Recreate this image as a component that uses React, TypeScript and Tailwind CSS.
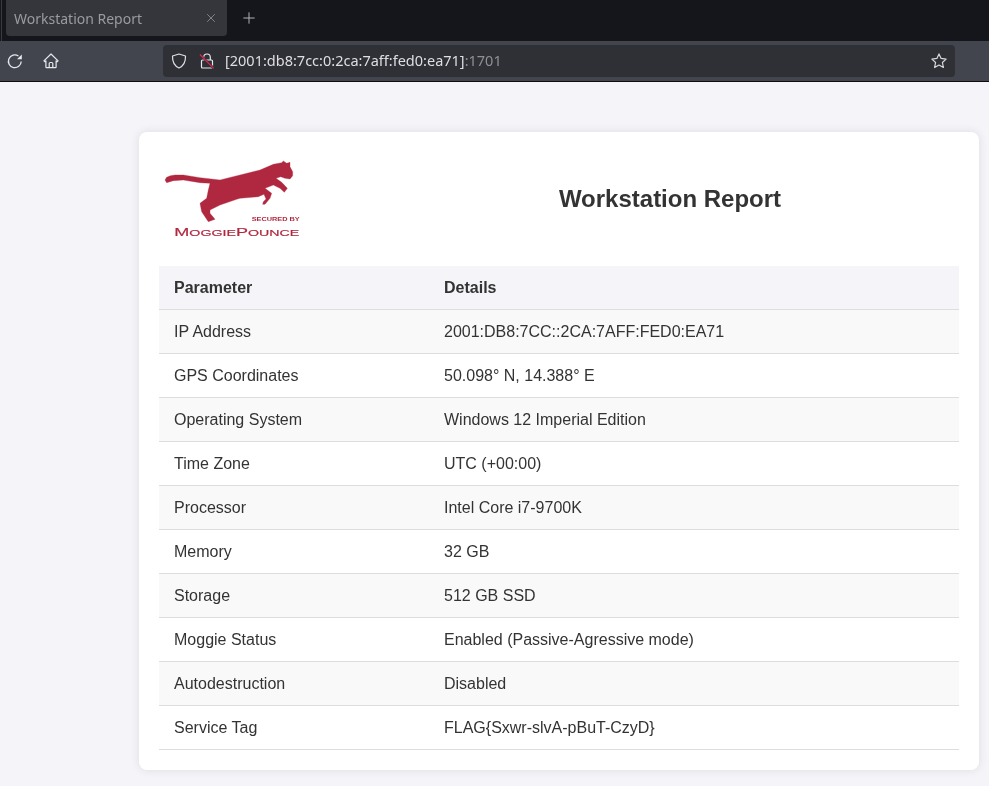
import { Plus, X } from "lucide-react";

const rows = [
  ["IP Address", "2001:DB8:7CC::2CA:7AFF:FED0:EA71"],
  ["GPS Coordinates", "50.098° N, 14.388° E"],
  ["Operating System", "Windows 12 Imperial Edition"],
  ["Time Zone", "UTC (+00:00)"],
  ["Processor", "Intel Core i7-9700K"],
  ["Memory", "32 GB"],
  ["Storage", "512 GB SSD"],
  ["Moggie Status", "Enabled (Passive-Agressive mode)"],
  ["Autodestruction", "Disabled"],
  ["Service Tag", "FLAG{Sxwr-slvA-pBuT-CzyD}"],
];

function Reload() {
  return (
    <svg width="16" height="16" viewBox="0 0 16 16" fill="none" stroke="#e8e8ec" strokeWidth="1.3">
      <path d="M14.200 8.500A6.400 6.400 0 1 1 11.400 3" />
      <path d="M14.800 1.500v4.800H10z" fill="#e8e8ec" stroke="none" />
    </svg>
  );
}
function Home() {
  return (
    <svg width="16" height="16" viewBox="0 0 16 16" fill="none" stroke="#e8e8ec" strokeWidth="1.2" strokeLinejoin="round">
      <path d="M.9 7.900 8 1l7.100 6.900-1 .8-1-.8v6.100a.6.600 0 0 1-.6.600H3.500a.6.600 0 0 1-.6-.6V7.900l-1 .8z" />
      <path d="M6.200 14.600V10.500a1 1 0 0 1 1-1h1.600a1 1 0 0 1 1 1v4.100" />
    </svg>
  );
}
function Shield() {
  return (
    <svg width="16" height="16" viewBox="0 0 16 16" fill="none" stroke="#e0e0e4" strokeWidth="1.2" strokeLinejoin="round">
      <path d="M8 1 14.500 3C14.700 8.500 12.500 12.900 8 15 3.500 12.900 1.300 8.500 1.500 3z" />
    </svg>
  );
}
function LockSlash() {
  return (
    <svg width="16" height="16" viewBox="0 0 16 16" fill="none" strokeWidth="1.2">
      <path d="M4.700 7V4.300a3.300 3.300 0 0 1 6.600 0V7" stroke="#e8e8ec" />
      <path d="M3.500 7H12.500a1 1 0 0 1 1 1v6a1 1 0 0 1-1 1H3.500a1 1 0 0 1-1-1V8a1 1 0 0 1 1-1z" stroke="#e8e8ec" />
      <path d="M.9 1.500 14.700 15.300" stroke="#2f3036" strokeWidth="2.400" />
      <path d="M.9 1.500 14.700 15.300" stroke="#e22850" strokeWidth="1.100" />
    </svg>
  );
}
function Star() {
  return (
    <svg width="16" height="16" viewBox="0 0 16 16" fill="none" stroke="#d8d8dc" strokeWidth="1.2" strokeLinejoin="round">
      <path d="M8 .9 10.100 5.400 15.100 6.100 11.400 9.500 12.400 14.500 8 12 3.600 14.500 4.600 9.500.9 6.100 5.900 5.400z" />
    </svg>
  );
}

function Logo() {
  return (
    <div className="w-[222px] h-[94px] shrink-0">
      <svg width="150" height="94" viewBox="27 6 450 282" className="block">
        <path
          fill="#b0283f"
          stroke="#b0283f"
          strokeWidth="1"
          strokeLinejoin="round"
          d="M45 90 L50 82 Q60 76 75 75 L100 75 L150 83 L210 90 L270 75 L330 60 L370 43 L395 38 L400 33 L410 40 L420 37 L420 50 L428 65 L428 77 L420 87 L405 85 L392 80 L378 85 L395 97 L412 115 L403 127 L390 115 L370 105 L345 115 L365 130 L360 145 L345 163 L338 163 L340 155 L348 147 L342 133 L325 140 L270 145 L260 148 L210 165 L180 180 L180 190 L195 208 L175 215 L155 185 L150 160 L170 145 L175 120 L180 100 L150 98 L100 90 L70 92 L50 98 Z"
        />
        <text
          x="305"
          y="213"
          textLength="144"
          lengthAdjust="spacingAndGlyphs"
          fill="#b0283f"
          fontSize="15"
          fontWeight="700"
          fontFamily="Liberation Sans, sans-serif"
        >
          SECURED BY
        </text>
        <text
          x="73"
          y="257"
          textLength="375"
          lengthAdjust="spacingAndGlyphs"
          fill="#b0283f"
          stroke="#b0283f"
          strokeWidth="0.5"
          fontSize="26"
          fontFamily="Liberation Sans, sans-serif"
        >
          <tspan fontSize="33">M</tspan>OGGIE<tspan fontSize="33">P</tspan>OUNCE
        </text>
      </svg>
    </div>
  );
}

export default function App() {
  return (
    <div className="w-[989px] h-[786px] overflow-hidden bg-[#f4f4f9] flex flex-col font-['Liberation_Sans',sans-serif] text-[#333333]">
      <div className="h-[41px] bg-[#15161c] flex items-start shrink-0 font-['Noto_Sans',sans-serif]">
        <div className="w-[1px] h-[41px] ml-[1px] bg-[#3a3b42]" />
        <div className="ml-[4px] w-[221px] h-[36px] bg-[#35363c] rounded-b-[4px] flex items-center pl-[8px] pr-[9px] justify-between">
          <span className="text-[14px] text-[#9a9ba0] [will-change:transform]">Workstation Report</span>
          <X size={14} color="#9a9ba0" strokeWidth={1.3} />
        </div>
        <div className="ml-[13px] h-[36px] flex items-center">
          <Plus size={18} color="#b5b6ba" strokeWidth={1.3} />
        </div>
      </div>
      <div className="h-[41px] shrink-0 bg-[#42454e] border-b border-[#0c0c0f] flex items-center font-['Noto_Sans',sans-serif]">
        <div className="ml-[7px] w-[16px] h-[16px]"><Reload /></div>
        <div className="ml-[20px] w-[16px] h-[16px]"><Home /></div>
        <div className="ml-[104px] w-[792px] h-[32px] bg-[#2f3036] rounded-[4px] flex items-center pl-[8px] pr-[8px]">
          <Shield />
          <div className="ml-[12px]"><LockSlash /></div>
          <div className="ml-[10px] text-[14.500px] text-[#dfdfe3] flex-1 whitespace-nowrap [will-change:transform]">
            [2001:db8:7cc:0:2ca:7aff:fed0:ea71]<span className="text-[#8f9096]">:1701</span>
          </div>
          <Star />
        </div>
      </div>
      <div className="flex-1 pt-[50px] pl-[139px]">
        <div className="w-[840px] h-[638px] bg-white rounded-[8px] shadow-[0_0_10px_rgba(0,0,0,0.1)] p-[20px]">
          <div className="[will-change:transform]">
            <div className="flex items-center h-[94px] mb-[20px]">
              <Logo />
              <h1 className="flex-1 text-center text-[24px] font-bold text-[#333333]">Workstation Report</h1>
            </div>
            <table className="w-[800px] border-separate border-spacing-0 text-[16px] table-fixed">
              <thead>
                <tr className="bg-[#f4f4f9]">
                  <th className="w-[270px] h-[44px] text-left font-bold pl-[15px] border-b border-[#dddddd]">Parameter</th>
                  <th className="h-[44px] text-left font-bold pl-[15px] border-b border-[#dddddd]">Details</th>
                </tr>
              </thead>
              <tbody>
                {rows.map(([k, v], i) => (
                  <tr key={k} className={i % 2 === 0 ? "bg-[#f9f9f9]" : "bg-white"}>
                    <td className="h-[44px] pl-[15px] border-b border-[#dddddd]">{k}</td>
                    <td className="h-[44px] pl-[15px] border-b border-[#dddddd]">{v}</td>
                  </tr>
                ))}
              </tbody>
            </table>
          </div>
        </div>
      </div>
    </div>
  );
}
